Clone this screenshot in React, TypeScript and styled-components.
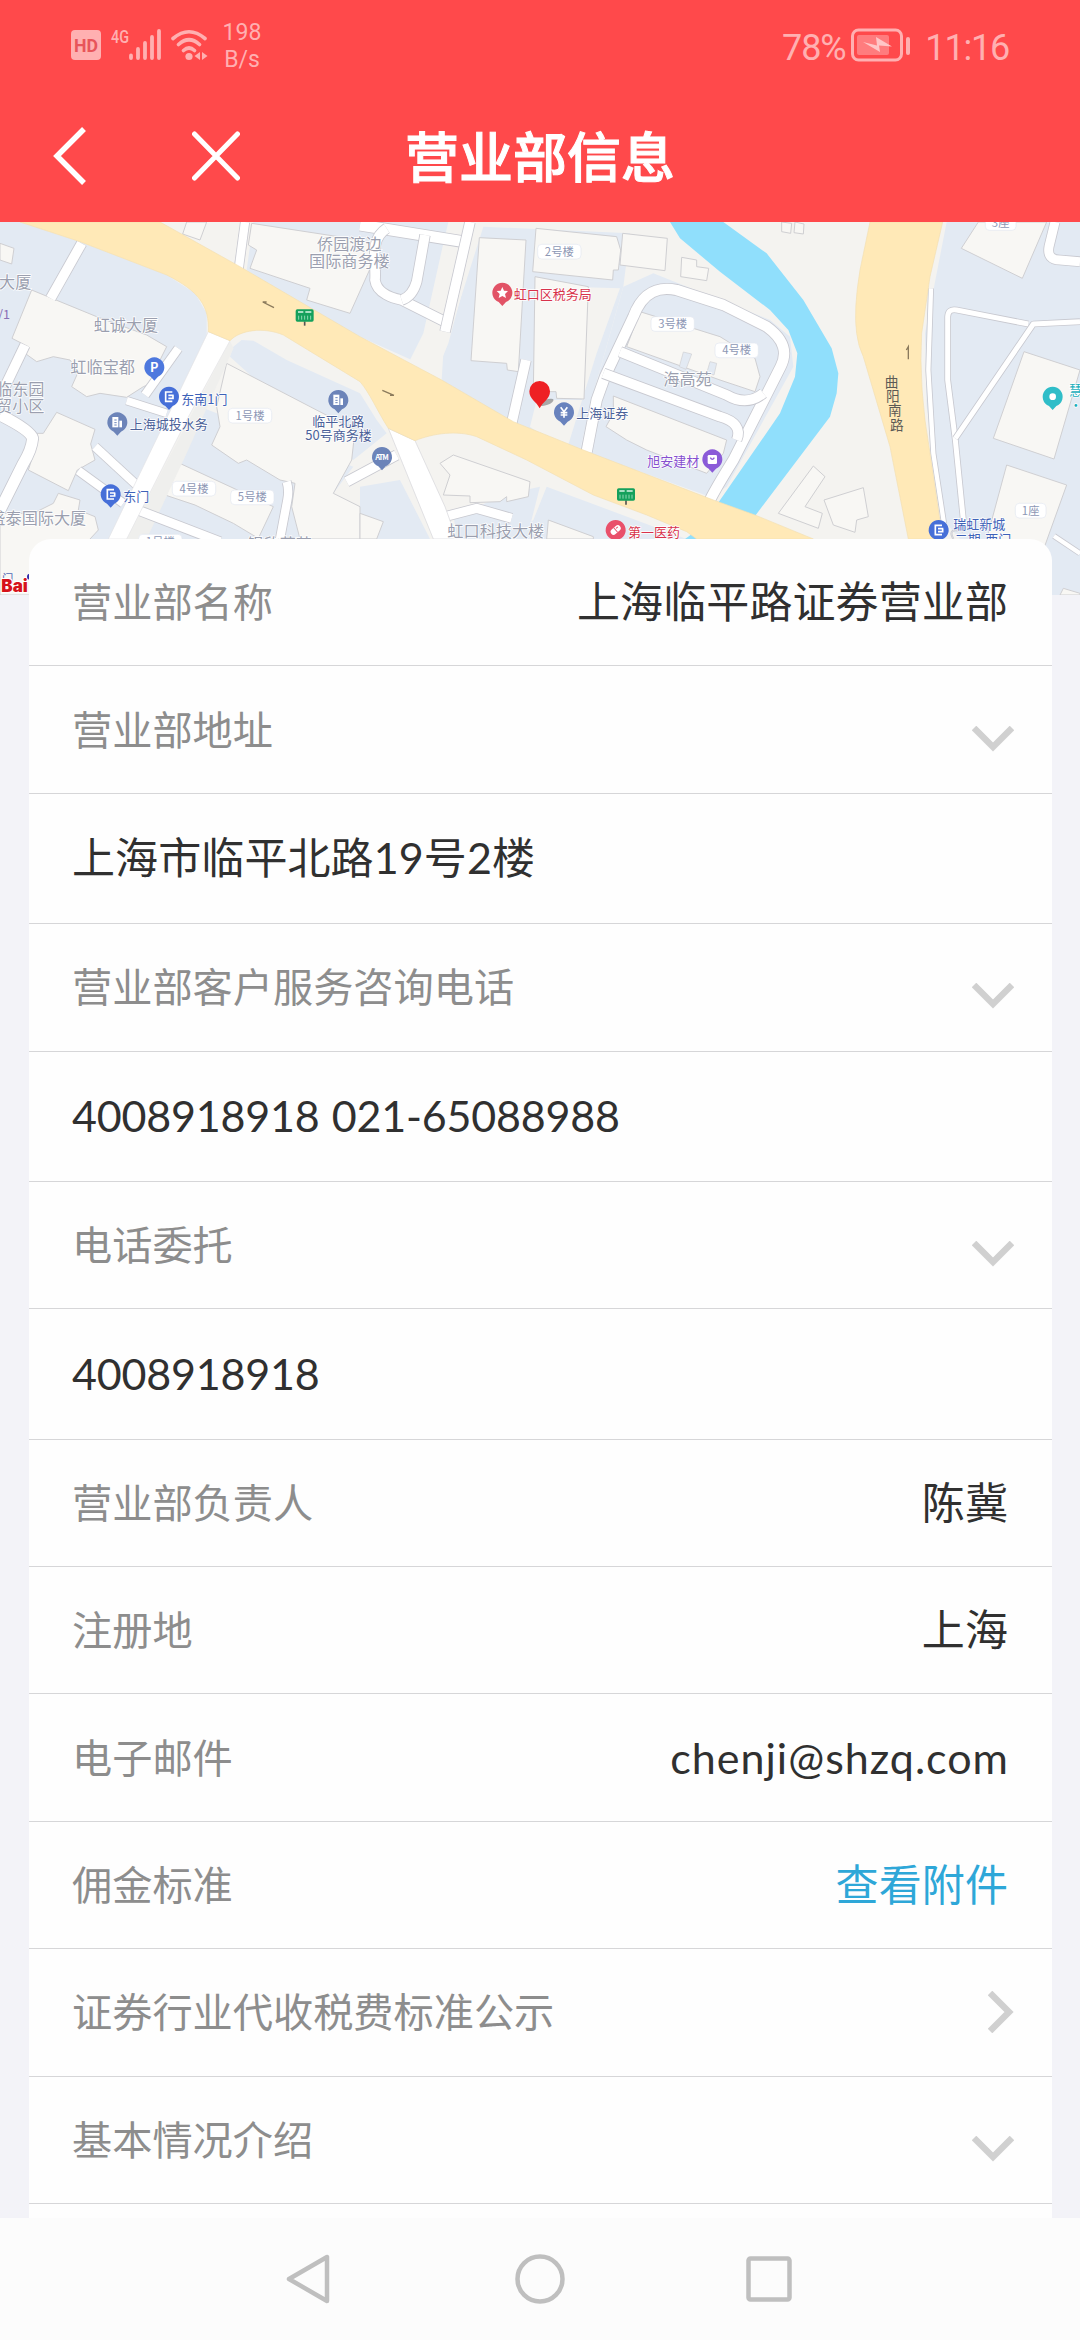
import React from 'react'
import styled, { createGlobalStyle, css } from 'styled-components'

const GlobalStyle = createGlobalStyle`
    * {
        box-sizing: border-box;
    }
    body {
        margin: 0;
        background: #f3f3f8;
        font-family: Roboto, 'Noto Sans CJK SC', sans-serif;
    }
`

const Page = styled.div`
    display: flex;
    flex-direction: column;
    width: 1080px;
    height: 2340px;
    overflow: hidden;
    background: #f3f3f8;
`

const Header = styled.header`
    flex: none;
    display: flex;
    flex-direction: column;
    height: 222px;
    background: #ff494b;
`

const StatusBar = styled.div`
    display: flex;
    justify-content: space-between;
    height: 90px;
    padding: 0 71px;
    color: #ffb0b1;
`

const StatusGroup = styled.div`
    display: flex;
    align-items: center;
`

const NetSpeed = styled.div`
    width: 44px;
    margin-left: 11px;
    padding-top: 2px;
    font-size: 23px;
    line-height: 27px;
    text-align: center;
`

const StatusText = styled.span`
    padding-top: 5px;
    font-size: 36px;
    line-height: 42px;
    letter-spacing: -1.2px;
`

const Battery = styled.svg`
    margin: 0 14px 0 6px;
`

const TitleBar = styled.div`
    display: grid;
    grid-template-columns: 1fr auto 1fr;
    align-items: center;
    height: 132px;
`

const TitleActions = styled.div`
    display: flex;
    align-items: center;
    gap: 105px;
    padding: 0 0 1px 52px;
`

const Title = styled.h1`
    margin: 0;
    padding-bottom: 3px;
    color: #fff;
    font-size: 54px;
    font-weight: 500;
    line-height: 80px;
    font-family: 'Noto Sans CJK SC', sans-serif;
    -webkit-text-stroke: 1px #fff;
`

const MapView = styled.svg`
    flex: none;
    display: block;
    width: 1080px;
    height: 373px;
    background: #f4f3f0;
    font-family: 'Noto Sans CJK SC', sans-serif;
`

const Card = styled.main`
    position: relative;
    flex: 1;
    min-height: 0;
    margin: -56px 28px 0 29px;
    overflow: hidden;
    border-radius: 22px 22px 0 0;
    background: #fefefe;
`

const Row = styled.div<{ $kind?: 'label' | 'detail' }>`
    display: flex;
    align-items: center;
    justify-content: space-between;
    height: ${p => (p.$kind === 'detail' ? '130.3px' : '127.42px')};
    padding: 0 44px 0 43px;
    border-bottom: 1px solid #d6d6d8;
`

const Label = styled.span`
    color: #8d8d8d;
    font-family: 'Noto Sans CJK SC', sans-serif;
    font-size: 40.2px;
    line-height: 60px;
    padding-bottom: 4px;
`

const Value = styled.span<{ $link?: boolean; $latin?: boolean; $digits?: boolean }>`
    color: ${p => (p.$link ? '#2ea7d8' : '#303030')};
    font-family: Lato, 'Noto Sans CJK SC', sans-serif;
    font-size: 43px;
    line-height: 60px;
    letter-spacing: 0.1px;
    ${p => p.$latin && css`
        letter-spacing: 1px;
        margin-right: -1px;
    `}
    ${p => p.$digits && css`
        letter-spacing: -0.2px;
        word-spacing: 1.5px;
    `}
`

const Arrow = styled.svg<{ $open?: boolean }>`
    flex: none;
    margin-right: -6px;
    ${p => p.$open && css`
        margin-top: 18px;
    `}
`

const NavBar = styled.nav`
    flex: none;
    display: flex;
    align-items: center;
    justify-content: center;
    gap: 179px;
    height: 122px;
    background: #fcfcfc;
`

interface RoadProps {
    d: string
    w?: number
}

const Road = ({ d, w = 30 }: RoadProps) => (
    <g fill="none" strokeLinejoin="round">
        <path d={d} stroke="#c8c9d0" strokeWidth={w} />
        <path d={d} stroke="#fff" strokeWidth={w - 5} />
    </g>
)

const Building = ({ points }: { points: string }) => (
    <polygon points={points} fill="#f8f7f4" stroke="#cfcfd2" strokeWidth="3" />
)

interface MarkerProps {
    x: number
    y: number
    color: string
    children?: React.ReactNode
}

const Marker = ({ x, y, color, children }: MarkerProps) => (
    <g transform={`translate(${x} ${y})`}>
        <path d="M0 40L-11 28A30 30 0 1 1 11 28Z" fill={color} />
        {children}
    </g>
)

const Gate = () => (
    <path d="M10 -14H-10V14H10M-2 -4H14M-2 5H12V-4" fill="none" stroke="#fff" strokeWidth="5" />
)

const Office = () => (
    <g fill="#fff">
        <path d="M-12 -16H3V15H-15V-16Z" />
        <path d="M6 -5H14V15H6Z" />
        <path d="M-9 -7H-2M-9 1H-2M-9 8H-2" stroke="#6c84b9" strokeWidth="3" />
    </g>
)

const BusStop = ({ x, y }: { x: number; y: number }) => (
    <g transform={`translate(${x} ${y})`}>
        <path d="M0 14V27" stroke="#555" strokeWidth="5" />
        <rect x="-27" y="-22" width="54" height="37" rx="5" fill="#14a05c" />
        <path d="M-20 -14H-4M2 -14H20" stroke="#d8f4e4" strokeWidth="5" />
        <path d="M-18 -3V9M-9 -3V9M0 -3V9M9 -3V9M18 -3V9" stroke="#8fd9b3" strokeWidth="3" />
    </g>
)

const Tag = ({ x, y, w = 130, text }: { x: number; y: number; w?: number; text: string }) => (
    <g>
        <rect x={x - w / 2} y={y - 22} width={w} height="44" rx="12" fill="#fff" stroke="#e3e7f0" strokeWidth="2" />
        <text x={x} y={y + 12} fontSize="34" fill="#8d97b5" textAnchor="middle">{text}</text>
    </g>
)

const areas = [
    '0,6 60,6 240,65 500,165 585,220 620,280 620,345 330,957 0,957',
    '690,410 700,380 725,360 760,362 860,420 1080,520 1130,600 1160,640 1060,720 900,600',
    '600,560 1060,740 1000,820 1080,860 1080,957 420,957',
    '760,6 1420,6 1340,320 1290,300 1270,400 1235,420 1080,350 900,260 740,150',
    '1450,20 1890,40 1870,200 1780,520 1740,690 1690,670 1540,610 1325,480 1330,400',
    '1870,200 1960,160 2310,300 2370,350 2380,440 2180,800 2130,830 1740,690 1800,450',
    '1080,800 1200,780 1290,957 1080,957',
    '1640,800 2060,957 1530,957 1600,900',
    '1360,880 1430,860 1530,820 1620,800 1580,957 1370,957',
    '2840,6 3240,6 3240,1125 2960,1125 2880,957 2830,900 2780,560 2775,340',
]

// open ground painted back over the blocks
const grounds = [
    '1345,6 1330,70 1270,340 1225,430 1300,480 1345,370 1440,20 1440,6',
    '1700,200 1860,205 1790,400 1740,560 1700,690 1660,670 1590,620 1610,540 1750,540',
]

const buildings = [
    '0,70 42,85 35,132 0,120',
    '95,210 290,290 440,345 500,380 480,420 455,490 430,500 380,532 300,520 260,530 215,500 235,455 210,420 160,410 110,425 75,400 85,380 36,355',
    '170,577 285,628 272,672 285,720 232,750 205,812 85,750 115,655 108,640 130,640',
    '175,820 240,840 235,870 285,890 295,930 270,957 90,1125 0,1125 0,880 100,880 160,850',
    '680,430 1065,630 1055,720 1000,820 1080,860 1080,957 900,957 875,860 885,790 840,780 740,720 715,730 635,675 660,620 650,560',
    '535,728 820,860 775,955 700,910 585,855 495,825',
    '755,10 1080,60 1140,80 1050,280 920,240 930,205 750,145 770,90 745,75',
    '560,6 620,6 600,60 548,42',
    '1438,53 1578,60 1555,455 1522,450 1520,430 1413,422',
    '1608,25 1850,50 1862,90 1855,150 1840,150 1838,180 1598,155',
    '1605,170 1765,200 1752,537 1670,535 1668,515 1600,515',
    '1868,40 2002,55 1995,152 1860,135',
    '2045,112 2090,120 2090,140 2126,145 2120,182 2042,170',
    '1920,275 2160,350 2265,415 2280,470 2265,515 2160,480 1880,380',
    '1840,528 2180,660 2170,700 2120,760 1940,690 1880,660 1818,620 1840,580',
    '1360,705 1590,785 1585,830 1520,845 1520,830 1500,845 1410,848 1410,828 1330,825 1350,765 1320,730',
    '1080,880 1150,905 1130,957 1080,957',
    '1645,900 1780,950 1780,957 1640,957',
    '2345,6 2375,10 2372,40 2345,35',
    '2385,6 2412,12 2410,42 2382,38',
    '2440,738 2475,770 2415,860 2467,880 2455,925 2335,880',
    '2472,840 2590,803 2605,890 2570,900 2565,937 2500,915',
    '2935,6 3140,6 3067,175 2884,85',
    '3072,395 3240,450 3162,717 2980,655',
    '3020,735 3200,795 3130,990 2960,957',
    '3190,1105 3240,1120 3240,1125 3180,1125',
]

const roads: RoadProps[] = [
    { d: 'M245 70L152 235', w: 34 },
    { d: 'M75 375L15 500', w: 34 },
    { d: 'M535 385L435 525', w: 30 },
    { d: 'M380 542L500 580', w: 28 },
    { d: 'M0 585Q90 630 98 655Q95 690 70 730L0 870', w: 38 },
    { d: 'M285 680L415 800', w: 30 },
    { d: 'M235 752L370 850', w: 30 },
    { d: 'M860 785Q868 810 862 840L840 957', w: 30 },
    { d: 'M735 6L715 155', w: 30 },
    { d: 'M1040 785L1190 705', w: 34 },
    { d: 'M1080 15L1390 65', w: 38 },
    { d: 'M1160 25C1105 60 1130 130 1125 180C1130 220 1180 235 1205 240L1345 310', w: 34 },
    { d: 'M1275 45L1250 185C1240 220 1220 235 1205 240', w: 34 },
    { d: 'M1410 6L1335 335', w: 34 },
    { d: 'M1578 420L1535 610', w: 34 },
    { d: 'M1760 695L1790 540L1815 470L1900 290C1930 210 1980 200 2030 210L2170 255L2300 320C2355 360 2362 400 2342 440L2200 720Q2150 800 2130 840', w: 36 },
    { d: 'M1860 395L2180 525Q2240 560 2290 520', w: 34 },
    { d: 'M1810 460L2160 590Q2230 610 2210 660', w: 34 },
    { d: 'M1335 890L1430 865L1535 895', w: 32 },
    { d: 'M2793 205L2785 450L2800 700L2832 910', w: 18 },
    { d: 'M3085 312L2870 270Q2845 265 2843 290L2843 480L2866 660L2890 900', w: 20 },
    { d: 'M3240 305L3100 312L2866 655', w: 20 },
    { d: 'M3165 6L3147 80Q3140 120 3180 120L3240 125', w: 32 },
    { d: 'M3162 948L3240 1000', w: 18 },
    { d: 'M2860 957Q2840 920 2890 935', w: 6 },
]

const greyLabels = [
    { x: -3, y: 203, text: '大厦' },
    { x: 281, y: 333, text: '虹诚大厦' },
    { x: 211, y: 460, text: '虹临宝都' },
    { x: -12, y: 524, text: '临东园' },
    { x: -12, y: 576, text: '贸小区' },
    { x: -32, y: 912, text: '盛泰国际大厦' },
    { x: 951, y: 90, text: '侨园渡边' },
    { x: 927, y: 141, text: '国际商务楼' },
    { x: 1342, y: 952, text: '虹口科技大楼' },
    { x: 1990, y: 495, text: '海高苑' },
    { x: 742, y: 990, text: '银欣花苑' },
]

const poiLabels = [
    { x: 544, y: 551, text: '东南1门', fill: '#3e62b8' },
    { x: 389, y: 627, text: '上海城投水务', fill: '#4b6199' },
    { x: 370, y: 842, text: '东门', fill: '#3e62b8' },
    { x: 937, y: 617, text: '临平北路', fill: '#4b6199' },
    { x: 916, y: 660, text: '50号商务楼', fill: '#4b6199' },
    { x: 1541, y: 237, text: '虹口区税务局', fill: '#d8324b' },
    { x: 1729, y: 595, text: '上海证券', fill: '#4b6199' },
    { x: 1942, y: 737, text: '旭安建材', fill: '#8650cf' },
    { x: 1884, y: 950, text: '第一医药', fill: '#d8324b' },
    { x: 2860, y: 928, text: '瑞虹新城', fill: '#3e62b8' },
    { x: 2864, y: 972, text: '二期-西门', fill: '#3e62b8' },
    { x: 3207, y: 526, text: '慧', fill: '#19aebb' },
    { x: 3208, y: 570, text: '·体', fill: '#19aebb' },
]

const BranchMap = () => (
    <MapView viewBox="0 6 3240 1119">
        {areas.map(points => <polygon key={points} points={points} fill="#e3eaf3" />)}
        {grounds.map(points => <polygon key={points} points={points} fill="#f4f3f0" />)}
        <path d="M2010 6L2040 55L2160 155L2310 270L2365 330L2392 400L2385 470L2340 580L2150 855L2265 888L2490 590L2510 520L2515 460L2495 385L2410 240L2300 100L2170 6Z" fill="#90dffc" />
        <path d="M2055 957L2100 925L2200 957Z" fill="#90dffc" />
        {buildings.map(points => <Building key={points} points={points} />)}
        <path d="M2050 396L2075 402L2058 448L2038 440ZM2130 425L2150 430L2142 465L2120 460Z" fill="#e3eaf3" stroke="#cfcfd2" strokeWidth="2" />
        <path d="M690 362L700 385L560 700L440 957L380 957Z" fill="#efefed" />
        {roads.map(road => <Road key={road.d} {...road} />)}
        <Road d="M400 865L660 965" w={32} />
        <path d="M625 335L690 362L560 600L380 957L325 957L420 760Z" fill="#fff" stroke="#e2e2e6" strokeWidth="2" />
        <path d="M1165 625L1245 662L1335 860L1370 957L1300 957Z" fill="#fff" stroke="#d4d4d9" strokeWidth="2" />
        {/* main roads */}
        <path
            d="M60 6L240 65L500 165C600 215 628 260 625 335L690 362C720 330 790 320 850 345L1080 485C1110 520 1130 570 1165 625L1245 662C1300 640 1370 630 1430 650L1580 720L1780 825L1940 885L2060 935L2090 957H2440L2265 885L2140 840L1750 690L1540 605L1325 480L1080 350L720 140L480 6Z"
            fill="#ffe9b7" stroke="#f3dfb2" strokeWidth="2"
        />
        <path
            d="M2610 6L2580 150Q2560 270 2570 340Q2575 380 2590 410L2670 680L2725 957H2828L2790 700Q2755 500 2765 340L2790 170L2828 6Z"
            fill="#ffe9b7" stroke="#f3dfb2" strokeWidth="2"
        />
        <path d="M788 246L822 263M788 246L800 246M1147 511L1182 526M1182 526L1170 526M2725 418V380L2719 390" fill="none" stroke="#8b7a5c" strokeWidth="4" />

        <Tag x={750} y={587} text="1号楼" />
        <Tag x={582} y={806} text="4号楼" />
        <Tag x={757} y={832} text="5号楼" />
        <Tag x={481} y={965} text="1号楼" />
        <Tag x={1678} y={95} text="2号楼" />
        <Tag x={2018} y={312} text="3号楼" />
        <Tag x={2210} y={391} text="4号楼" />
        <Tag x={3002} y={9} w={92} text="3座" />
        <Tag x={3092} y={872} w={92} text="1座" />

        <g fontSize="48.5" fill="#9b9faf" stroke="#fff" strokeWidth="4" paintOrder="stroke">
            {greyLabels.map(l => <text key={l.text + l.y} x={l.x} y={l.y}>{l.text}</text>)}
        </g>
        <g fontSize="39" stroke="#fff" strokeWidth="4" paintOrder="stroke">
            {poiLabels.map(l => <text key={l.text} x={l.x} y={l.y} fill={l.fill}>{l.text}</text>)}
        </g>
        <text x="-6" y="297" fontSize="38" fill="#8a6fb5">/1</text>
        <g fontSize="41" fill="#5b5a55">
            <text x="2654" y="500">曲</text>
            <text x="2658" y="542">阳</text>
            <text x="2664" y="586">南</text>
            <text x="2670" y="630">路</text>
        </g>

        <BusStop x={914} y={290} />
        <BusStop x={1878} y={827} />

        <Marker x={463} y={442} color="#4d78de">
            <text y="14" fontSize="38" fontWeight="700" fill="#fff" textAnchor="middle">P</text>
        </Marker>
        <Marker x={507} y={530} color="#466fd8"><Gate /></Marker>
        <Marker x={332} y={823} color="#466fd8"><Gate /></Marker>
        <Marker x={2816} y={930} color="#466fd8"><Gate /></Marker>
        <Marker x={352} y={607} color="#6c84b9"><Office /></Marker>
        <Marker x={1015} y={540} color="#6c84b9"><Office /></Marker>
        <Marker x={1507} y={218} color="#e25366">
            <path d="M0 -17L5 -6L17 -5L8 4L11 16L0 10L-11 16L-8 4L-17 -5L-5 -6Z" fill="#fff" />
        </Marker>
        <Marker x={1692} y={577} color="#6882bd">
            <path d="M-10 -15L0 -2L10 -15M0 -2V16M-10 1H10M-10 8H10" fill="none" stroke="#fff" strokeWidth="5" />
        </Marker>
        <Marker x={1146} y={711} color="#6c84b9">
            <text y="9" fontSize="23" fontWeight="700" fill="#fff" textAnchor="middle" textLength="40">ATM</text>
        </Marker>
        <Marker x={2137} y={718} color="#8b5bd8">
            <rect x="-14" y="-13" width="28" height="27" rx="4" fill="#fff" />
            <path d="M-6 -5Q0 5 6 -5" fill="none" stroke="#8b5bd8" strokeWidth="4" />
        </Marker>
        <Marker x={1847} y={930} color="#e9506a">
            <g transform="rotate(-40)">
                <rect x="-17" y="-9" width="34" height="18" rx="9" fill="#fff" />
                <path d="M0 -9V9M4 -3H11" stroke="#e9506a" strokeWidth="3" />
            </g>
        </Marker>
        <Marker x={3158} y={530} color="#2fbdc8">
            <circle r="10" fill="#fff" />
        </Marker>

        <ellipse cx="1640" cy="547" rx="22" ry="8" fill="#777" opacity=".6" transform="rotate(-22 1640 547)" />
        <path d="M1619 565C1609 545 1588 537 1588 514A31 31 0 0 1 1650 514C1650 537 1629 545 1619 565Z" fill="#ee2024" />

        <text x="6" y="1089" fontSize="34" fill="#5169b5">门</text>
        <text x="4" y="1115" fontSize="51" fontWeight="900" fill="#d6121b" stroke="#fff" strokeWidth="6" paintOrder="stroke" fontFamily="Inter, sans-serif">Bai</text>
        <circle cx="90" cy="1070" r="9" fill="#2d2aa8" />
    </MapView>
)

const DownArrow = () => (
    <Arrow $open width="42" height="26" viewBox="0 0 42 26">
        <path d="M2 2L21 21L40 2" fill="none" stroke="#d0d0d0" strokeWidth="6.5" />
    </Arrow>
)

const RightArrow = () => (
    <Arrow width="26" height="42" viewBox="0 0 26 42">
        <path d="M2 2L21 21L2 40" fill="none" stroke="#d0d0d0" strokeWidth="6.5" />
    </Arrow>
)

interface InfoItem {
    label: string
    value?: string
    detail?: string
    arrow?: 'down' | 'right'
    link?: boolean
    latin?: boolean
    digits?: boolean
}

const items: InfoItem[] = [
    { label: '营业部名称', value: '上海临平路证券营业部' },
    { label: '营业部地址', arrow: 'down', detail: '上海市临平北路19号2楼' },
    { label: '营业部客户服务咨询电话', arrow: 'down', detail: '4008918918 021-65088988', digits: true },
    { label: '电话委托', arrow: 'down', detail: '4008918918', digits: true },
    { label: '营业部负责人', value: '陈冀' },
    { label: '注册地', value: '上海' },
    { label: '电子邮件', value: 'chenji@shzq.com', latin: true },
    { label: '佣金标准', value: '查看附件', link: true },
    { label: '证券行业代收税费标准公示', arrow: 'right' },
    { label: '基本情况介绍', arrow: 'down' },
]

export default function App() {
    return (
        <Page>
            <GlobalStyle />
            <Header>
                <StatusBar>
                    <StatusGroup>
                        <svg width="138" height="34" viewBox="0 0 138 34" fill="currentColor">
                            <rect x="0" y="2" width="30" height="30" rx="4" />
                            <text x="15" y="23.5" fontSize="19" fontWeight="700" fill="#e8555a" textAnchor="middle" textLength="24" lengthAdjust="spacingAndGlyphs">HD</text>
                            <text x="40" y="15" fontSize="19" fontWeight="500" textLength="18" lengthAdjust="spacingAndGlyphs">4G</text>
                            <g strokeWidth="3.8" strokeLinecap="round" stroke="currentColor">
                                <path d="M60 27.5V30M67 21V30M74 15V30M81 9V30M88 3V30" />
                            </g>
                            <g fill="none" stroke="currentColor" strokeWidth="3.6" strokeLinecap="round">
                                <path d="M102 10.5Q118 -3 134 10.5M107.5 16.5Q118 7 128.5 16.5M112.5 22.5Q118 17.5 123.5 22.5" />
                            </g>
                            <circle cx="118" cy="28.5" r="3.6" />
                            <path d="M129 24V32L123.5 28ZM131 24V32L136.5 28Z" />
                        </svg>
                        <NetSpeed>198<br />B/s</NetSpeed>
                    </StatusGroup>
                    <StatusGroup>
                        <StatusText>78%</StatusText>
                        <Battery width="60" height="34" viewBox="0 0 60 34">
                            <rect x="1.5" y="2" width="49" height="30" rx="6" fill="none" stroke="currentColor" strokeWidth="3" />
                            <rect x="6" y="7" width="32" height="20" rx="2" fill="currentColor" opacity=".5" />
                            <path d="M12 14L26 17.5L25 9L41 18.5L28 17.5L29 24Z" fill="#ffc6c7" />
                            <path d="M57 11V25" stroke="currentColor" strokeWidth="4" strokeLinecap="round" />
                        </Battery>
                        <StatusText>11:16</StatusText>
                    </StatusGroup>
                </StatusBar>
                <TitleBar>
                    <TitleActions>
                        <svg width="35" height="60" viewBox="0 0 35 60" fill="none" stroke="#fff" strokeWidth="5.5">
                            <path d="M32 3L5 30L32 57" />
                        </svg>
                        <svg width="48" height="50" viewBox="0 0 48 50" fill="none" stroke="#fff" strokeWidth="5" strokeLinecap="round">
                            <path d="M2.5 3L45.5 47M45.5 3L2.5 47" />
                        </svg>
                    </TitleActions>
                    <Title>营业部信息</Title>
                </TitleBar>
            </Header>
            <BranchMap />
            <Card>
                {items.map(item => (
                    <React.Fragment key={item.label}>
                        <Row>
                            <Label>{item.label}</Label>
                            {item.value && <Value $link={item.link} $latin={item.latin}>{item.value}</Value>}
                            {item.arrow === 'down' && <DownArrow />}
                            {item.arrow === 'right' && <RightArrow />}
                        </Row>
                        {item.detail && (
                            <Row $kind="detail">
                                <Value $digits={item.digits}>{item.detail}</Value>
                            </Row>
                        )}
                    </React.Fragment>
                ))}
            </Card>
            <NavBar>
                <svg width="50" height="54" viewBox="0 0 50 54" fill="none" stroke="#bfbfbf" strokeWidth="4.5" strokeLinejoin="round">
                    <path d="M41 5V49L3 27Z" />
                </svg>
                <svg width="50" height="54" viewBox="0 0 50 54" fill="none" stroke="#bfbfbf" strokeWidth="4.5">
                    <circle cx="25" cy="27" r="22.5" />
                </svg>
                <svg width="50" height="54" viewBox="0 0 50 54" fill="none" stroke="#bfbfbf" strokeWidth="4.5">
                    <rect x="4.5" y="6.5" width="41" height="41" rx="2" />
                </svg>
            </NavBar>
        </Page>
    )
}
